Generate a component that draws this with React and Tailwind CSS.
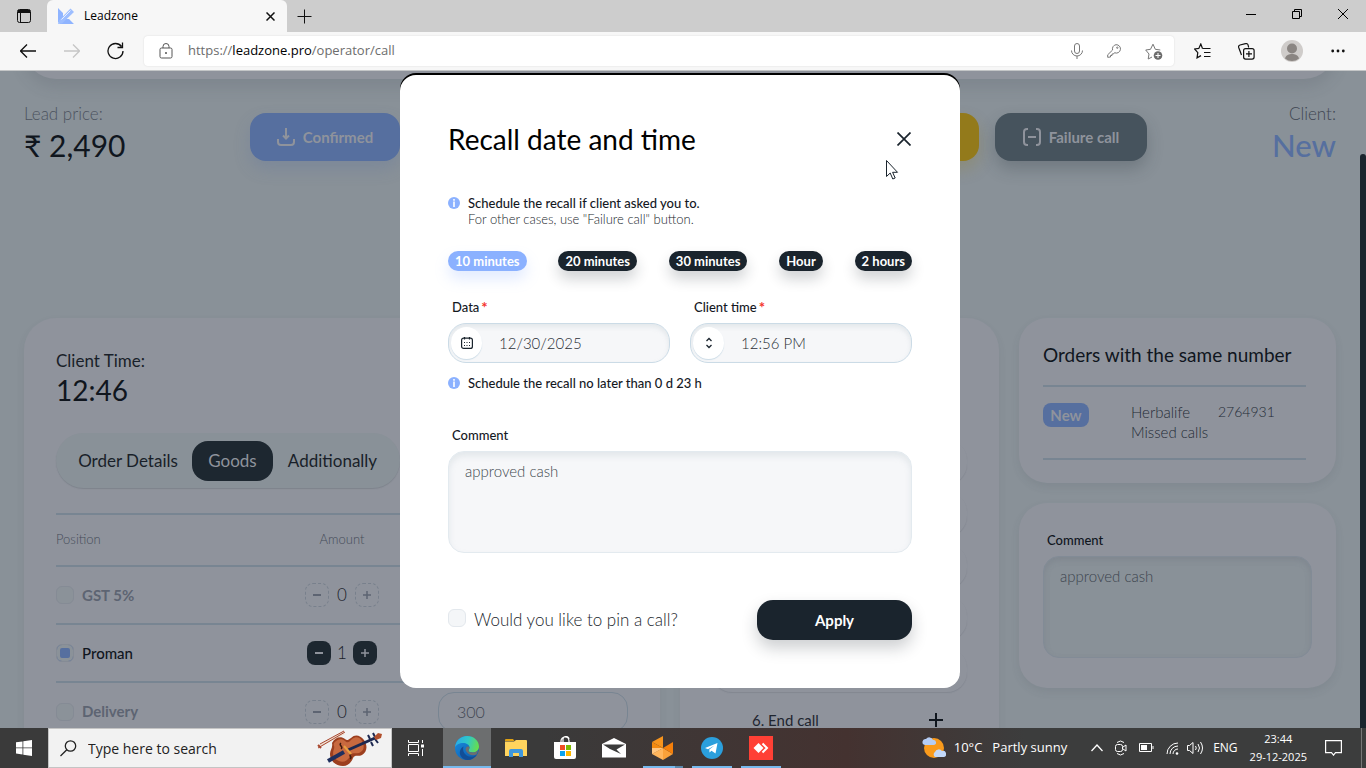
import { useState } from 'react'
import clsx from 'clsx'

const PRESETS = ['10 minutes', '20 minutes', '30 minutes', 'Hour', '2 hours']

const GOODS = [
  { name: 'GST 5%', amount: 0, active: false },
  { name: 'Proman', amount: 1, active: true },
  { name: 'Delivery', amount: 0, active: false, price: '300' },
]

// ---------- browser chrome ----------

function TabStrip() {
  return (
    <div className="flex h-8 shrink-0 items-end bg-[#cdcdcd]">
      <button type="button" aria-label="Tab actions" className="flex h-8 w-[47px] items-center justify-center">
        <svg width="14" height="14" viewBox="0 0 14 14" fill="none" stroke="#111">
          <rect x="0.5" y="0.5" width="13" height="13" rx="2" />
          <path d="M1 1.5h12M1 2.5h12M1 3.5h12" />
          <path d="M3.5 4v9" />
        </svg>
      </button>
      <div className="flex h-8 w-60 items-center rounded-t-md bg-[#f7f7f7] pr-3 pl-[10px]">
        <svg width="18" height="18" viewBox="0 0 18 18">
          <path d="M1 1l5 5v4l-5 6zM2 17l5-5h5l5 5z" fill="#8fb4ff" />
          <path d="M2 13.500L13.500 1.500 17 5 5 16.500 1 17z" fill="#9dbeff" />
          <path d="M4.500 12.500L13.500 3.500" stroke="#e6eeff" />
        </svg>
        <span className="ml-[9px] flex-1 text-[12px] text-black">Leadzone</span>
        <button type="button" aria-label="Close tab">
          <svg width="9" height="9" viewBox="0 0 9 9" stroke="#111" strokeWidth="1.500">
            <path d="M0.500 0.500l8 8M8.500 0.500l-8 8" />
          </svg>
        </button>
      </div>
      <button type="button" aria-label="New tab" className="ml-[10px] flex h-8 items-center">
        <svg width="15" height="15" viewBox="0 0 15 15" stroke="#111">
          <path d="M7.500 0.500v14M0.500 7.500h14" />
        </svg>
      </button>
      <div className="ml-auto flex h-7 items-center self-start">
        <button type="button" aria-label="Minimize" className="flex w-[46px] justify-center">
          <svg width="10" height="10" stroke="#000"><path d="M0 5.500h10" /></svg>
        </button>
        <button type="button" aria-label="Restore" className="flex w-[46px] justify-center">
          <svg width="10" height="10" fill="none" stroke="#000">
            <path d="M0.500 2.500h7v7h-7zM2.500 2.500v-2h7v7h-2" />
          </svg>
        </button>
        <button type="button" aria-label="Close" className="flex w-[46px] justify-center">
          <svg width="10" height="10" stroke="#000"><path d="M0 0l10 10M10 0L0 10" /></svg>
        </button>
      </div>
    </div>
  )
}

function Toolbar() {
  return (
    <div className="flex h-[39px] shrink-0 items-center border-b border-[#c4c6c7] bg-[#f7f7f7]">
      <div className="flex w-36 items-center justify-between pr-5 pl-5">
        <button type="button" aria-label="Back">
          <svg width="16" height="14" viewBox="0 0 16 14" fill="none" stroke="#111" strokeWidth="1.300">
            <path d="M7 0.500L0.500 7 7 13.500M0.500 7H16" />
          </svg>
        </button>
        <button type="button" aria-label="Forward">
          <svg width="16" height="14" viewBox="0 0 16 14" fill="none" stroke="#c6c6c6" strokeWidth="1.300">
            <path d="M9 0.500L15.500 7 9 13.500M15.500 7H0" />
          </svg>
        </button>
        <button type="button" aria-label="Refresh">
          <svg width="17" height="18" viewBox="0 0 17 18" fill="none" stroke="#111" strokeWidth="1.300">
            <path d="M14.500 4.500A7.500 7.500 0 1 0 16 9M15.500 0.500v5h-5" />
          </svg>
        </button>
      </div>
      <div className="flex h-[30px] flex-1 items-center rounded bg-white pr-[11px] pl-[15px] shadow-[0_0_2px_rgba(0,0,0,0.12)]">
        <svg width="14" height="16" viewBox="0 0 14 16" fill="none" stroke="#555">
          <rect x="1" y="5" width="12" height="10" rx="1.500" />
          <path d="M4 5V3.500a3 3 0 0 1 6 0V5" />
          <circle cx="7" cy="10" r="0.600" fill="#555" />
        </svg>
        <span className="ml-[15px] flex-1 text-[13px] text-[#6d6d6d]">
          https://<span className="text-black">leadzone.pro</span>/operator/call
        </span>
        <div className="flex items-center gap-6">
          <svg width="12" height="16" viewBox="0 0 12 16" fill="none" stroke="#777">
            <rect x="3.500" y="0.500" width="5" height="10" rx="2.500" />
            <path d="M0.500 7.500a5.500 5.500 0 0 0 11 0M6 13v3" />
          </svg>
          <svg width="14" height="14" viewBox="0 0 14 14" fill="none" stroke="#777">
            <path d="M9 0.700a4.200 4.200 0 1 1-1.500 8L6.500 10H5v1.500H3.500V13L0.700 13.300V10.800L5.600 6A4.200 4.200 0 0 1 9 0.700z" />
            <circle cx="10.300" cy="3.700" r="0.700" />
          </svg>
          <svg width="18" height="17" viewBox="0 0 18 17" fill="none" stroke="#777">
            <path d="M7 14l-3.800 2 .8-5L0.700 7l4.800-.7L8 1.200l2.300 5.100 5 .7" />
            <circle cx="13" cy="12.500" r="4.300" fill="#6b6b6b" stroke="none" />
            <path d="M13 10v5M10.500 12.500h5" stroke="#fff" />
          </svg>
        </div>
      </div>
      <div className="flex items-center pr-[21px] pl-5">
        <svg width="17" height="16" viewBox="0 0 17 16" fill="none" stroke="#111" strokeWidth="1.200">
          <path d="M8.500 5.500L6.800 1 4.800 5.400.6 6l3.200 3.600-.8 5.200L7 12.600M8.500 5.500H16.500M10 9.500h6.500M10 13.500h6.500" />
        </svg>
        <svg className="ml-[27px]" width="17" height="17" viewBox="0 0 17 17" fill="none" stroke="#111" strokeWidth="1.200">
          <path d="M3.500 12L0.700 4.500A2 2 0 0 1 2 2L7.500 0.700a2 2 0 0 1 2.600 1.400l.6 2.400" />
          <rect x="5.600" y="5.600" width="10.500" height="10.500" rx="2" />
          <path d="M10.900 8v6M8 10.900h6" />
        </svg>
        <svg className="ml-[26px]" width="22" height="22" viewBox="0 0 22 22">
          <circle cx="11" cy="11" r="11" fill="#cfccca" />
          <circle cx="11" cy="8.500" r="5" fill="#8a8582" />
          <path d="M4 18.500c1-3.500 4-4.500 7-4.500s6 1 7 4.500a11 11 0 0 1-14 0z" fill="#8a8582" />
        </svg>
        <svg className="ml-[28px]" width="14" height="4" fill="#111">
          <circle cx="1.700" cy="2" r="1.400" />
          <circle cx="7" cy="2" r="1.400" />
          <circle cx="12.300" cy="2" r="1.400" />
        </svg>
      </div>
    </div>
  )
}

// ---------- page behind the dialog ----------

function SummaryRow() {
  return (
    <div className="mt-[25px] flex items-start">
      <div className="w-[226px]">
        <div className="text-[17px] leading-5 font-light text-[#4c535f]">Lead price:</div>
        <div className="text-[30px] leading-[42px] text-[#10161e]">₹ 2,490</div>
      </div>
      <div className="mt-[9px] flex flex-1 gap-4 text-[15px] font-bold text-[#8f939c]">
        <button type="button" className="flex h-12 w-[150px] items-center justify-center gap-2 rounded-2xl bg-[#566f9f] shadow-[0_8px_16px_rgba(86,111,159,0.25)]">
          <svg width="18" height="18" viewBox="0 0 18 18" fill="none" stroke="currentColor" strokeWidth="2">
            <path d="M9 0v10M6 7.500l3 3 3-3M1 11v3a3 3 0 0 0 3 3h10a3 3 0 0 0 3-3v-3" />
          </svg>
          Confirmed
        </button>
        <button type="button" aria-label="Recall" className="h-12 flex-1 rounded-2xl bg-[#937a1b] shadow-[0_8px_16px_rgba(147,122,27,0.25)]" />
        <button type="button" className="flex h-12 w-[152px] items-center justify-center gap-2 rounded-2xl bg-[#46535d] shadow-[0_8px_16px_rgba(40,50,60,0.25)]">
          <svg width="18" height="18" viewBox="0 0 18 18" fill="none" stroke="currentColor" strokeWidth="2">
            <path d="M5 1H4a3 3 0 0 0-3 3v10a3 3 0 0 0 3 3h1M13 1h1a3 3 0 0 1 3 3v10a3 3 0 0 1-3 3h-1M5 9h8" />
          </svg>
          Failure call
        </button>
      </div>
      <div className="w-[189px] text-right">
        <div className="text-[17px] leading-5 font-light text-[#3f4651]">Client:</div>
        <div className="text-[31px] leading-[42px] font-medium text-[#566f9f]">New</div>
      </div>
    </div>
  )
}

function Counter({ amount, active }) {
  const btn = clsx(
    'flex size-6 items-center justify-center rounded-lg',
    active ? 'bg-[#1d2730] text-[#8f939c]' : 'border border-dashed border-[#78808c] text-[#5d6472]',
  )
  return (
    <div className="flex items-center justify-center">
      <button type="button" aria-label="Less" className={btn}>
        <svg width="8" height="8" stroke="currentColor" strokeWidth="2"><path d="M0 4h8" /></svg>
      </button>
      <span className={clsx('text-center text-[17px] font-light text-[#1a212a]', active ? 'w-[22px]' : 'w-[26px]')}>{amount}</span>
      <button type="button" aria-label="More" className={btn}>
        <svg width="8" height="8" stroke="currentColor" strokeWidth="1.500"><path d="M0 4h8M4 0v8" /></svg>
      </button>
    </div>
  )
}

function GoodsCard() {
  return (
    <section className="w-[636px] shrink-0 rounded-t-[32px] bg-[#8f939c] px-8 pt-8 shadow-[0_4px_8px_rgba(60,70,80,0.08)]">
      <div className="text-[17px] leading-[22px] text-[#191f29]">Client Time:</div>
      <div className="text-[28px] leading-9 text-[#10161e]">12:46</div>
      <div className="mt-[25px] flex h-[55px] w-[344px] items-center rounded-[28px] bg-[#899198] px-2 text-[17px] text-[#191f29] shadow-[0_1px_1px_rgba(60,70,80,0.2)]">
        <button type="button" className="h-10 flex-1">Order Details</button>
        <button type="button" className="h-10 w-[81px] rounded-2xl bg-[#1d2730] text-[#8f939c]">Goods</button>
        <button type="button" className="h-10 w-[119px]">Additionally</button>
      </div>
      <table className="mt-[25px] w-full table-fixed border-t-2 border-[#788592]">
        <thead>
          <tr className="h-[52px] text-[13px] font-light text-[#454c59]">
            <th className="w-[238px] text-left font-light">Position</th>
            <th className="w-24 text-center font-light">Amount</th>
            <th />
          </tr>
        </thead>
        <tbody>
          {GOODS.map((g) => (
            <tr key={g.name} className="h-[58px] border-t-2 border-[#788592]">
              <td>
                <label className={clsx('flex items-center gap-2 text-[15px]', g.active ? 'font-medium text-[#10161e]' : 'font-bold text-[#5d6472]')}>
                  <input
                    type="checkbox"
                    defaultChecked={g.active}
                    className="size-[18px] appearance-none rounded-md border border-[#858b95] bg-[#8b9299] checked:bg-[#566f9f] checked:shadow-[inset_0_0_0_3px_#8b9299]"
                  />
                  {g.name}
                </label>
              </td>
              <td><Counter amount={g.amount} active={g.active} /></td>
              <td>
                {g.price && (
                  <input
                    aria-label="Price"
                    defaultValue={g.price}
                    className="ml-auto block h-10 w-[190px] rounded-2xl border border-[#788592] px-[18px] text-[16px] font-light text-[#3f4651]"
                  />
                )}
              </td>
            </tr>
          ))}
        </tbody>
      </table>
    </section>
  )
}

function StepsCard() {
  return (
    <section className="w-[319px] shrink-0 rounded-t-[32px] bg-[#8f939c] px-8 pt-[122px] shadow-[0_4px_8px_rgba(60,70,80,0.08)]">
      <div className="flex flex-col gap-2">
        {[1, 2, 3, 4, 5].map((n) => (
          <div key={n} className="h-11 rounded-[20px] shadow-[0_1px_1px_rgba(60,70,80,0.15)]" />
        ))}
        <button type="button" className="flex h-10 items-center justify-between rounded-t-[20px] pr-6 pl-10 text-[15px] text-[#1f2630]">
          6. End call
          <svg width="14" height="14" stroke="#10161e" strokeWidth="2"><path d="M7 0v14M0 7h14" /></svg>
        </button>
      </div>
    </section>
  )
}

function SideColumn() {
  return (
    <div className="flex flex-1 flex-col gap-5">
      <section className="rounded-[28px] bg-[#8f939c] pt-6 pr-[30px] pb-[23px] pl-6 shadow-[0_4px_8px_rgba(60,70,80,0.1)]">
        <h2 className="text-[19px] leading-[26px] text-[#10161e]">Orders with the same number</h2>
        <div className="mt-[17px] flex items-start border-y-2 border-[#788592] pt-4 pb-4 text-[15px] leading-5 font-light text-[#242b36]">
          <span className="flex h-6 w-[46px] items-center justify-center rounded-lg bg-[#566f9f] font-bold text-[#8f939c]">New</span>
          <div className="-mt-px ml-[42px] grid grid-cols-[87px_auto]">
            <span>Herbalife</span>
            <span className="text-[14px]">2764931</span>
            <span className="col-span-2">Missed calls</span>
          </div>
        </div>
      </section>
      <section className="rounded-[28px] bg-[#8f939c] px-6 pt-[29px] pb-[30px] shadow-[0_4px_8px_rgba(60,70,80,0.1)]">
        <label htmlFor="page-comment" className="ml-1 block text-[13px] leading-4 font-medium text-[#10161e]">Comment</label>
        <textarea
          id="page-comment"
          defaultValue="approved cash"
          className="mt-2 block h-[102px] w-full resize-none rounded-2xl border border-[#828b96] bg-[#899198] px-4 py-[9px] text-[15px] leading-5 font-light text-[#3c444e] shadow-[inset_0_3px_6px_rgba(90,95,110,0.2)]"
        />
      </section>
    </div>
  )
}

// ---------- recall dialog ----------

function InfoDot() {
  return (
    <svg className="mt-[2px] shrink-0" width="12" height="12" viewBox="0 0 12 12">
      <circle cx="6" cy="6" r="6" fill="#8bb1ff" />
      <path d="M6 4.500V10M6 2v1.700" stroke="#fff" strokeWidth="1.600" />
    </svg>
  )
}

function PickerField({ id, label, value, icon }) {
  return (
    <div>
      <label htmlFor={id} className="ml-1 flex text-[13px] leading-4 font-medium text-[#15191f]">
        {label}<span className="ml-[2px] text-[15px] leading-4 font-bold text-[#f4342c]">*</span>
      </label>
      <div className="mt-2 flex h-10 items-center rounded-[18px] border border-[#cbdbe6] bg-[#f6f7f9] pl-[2px] shadow-[inset_0_3px_5px_rgba(150,170,180,0.2)]">
        <button type="button" aria-label={'Pick ' + label} className="flex h-8 w-[31px] shrink-0 items-center justify-center rounded-2xl bg-white shadow-[0_1px_1px_#cbdbe6]">
          {icon}
        </button>
        <input id={id} defaultValue={value} className="w-full min-w-0 flex-1 pl-[17px] text-[15px] font-light text-[#2a2f35]" />
      </div>
    </div>
  )
}

function RecallDialog() {
  const [preset, setPreset] = useState(PRESETS[0])

  return (
    <div role="dialog" aria-label="Recall date and time" className="h-fit w-[560px] rounded-2xl bg-white p-12 shadow-[0_-2px_0_#000]">
      <div className="flex h-8 items-center justify-between">
        <h1 className="text-[28px] leading-8 text-black">Recall date and time</h1>
        <button type="button" aria-label="Close" className="pr-[1px]">
          <svg width="14" height="14" stroke="#1a242d" strokeWidth="1.700"><path d="M0.500 0.500l13 13M13.500 0.500l-13 13" /></svg>
        </button>
      </div>

      <div className="mt-10 flex gap-2 text-[13px] leading-4">
        <InfoDot />
        <p>
          <span className="block font-medium text-[#15191f]">Schedule the recall if client asked you to.</span>
          <span className="block font-light text-[#20252b]">For other cases, use "Failure call" button.</span>
        </p>
      </div>

      <div className="mt-6 flex justify-between">
        {PRESETS.map((p) => (
          <button
            key={p}
            type="button"
            onClick={() => setPreset(p)}
            className={clsx(
              'h-5 rounded-[10px] px-[7px] text-[13px] leading-5 font-bold text-white',
              p === preset
                ? 'bg-[#8bb1ff] shadow-[0_8px_14px_rgba(139,177,255,0.25)]'
                : 'bg-[#1a242d] shadow-[0_8px_14px_rgba(26,36,45,0.2)]',
            )}
          >
            {p}
          </button>
        ))}
      </div>

      <div className="mt-7 grid grid-cols-2 gap-5">
        <PickerField
          id="recall-date"
          label="Data"
          value="12/30/2025"
          icon={
            <svg width="12" height="12" viewBox="0 0 12 12" fill="none" stroke="#1a242d" strokeWidth="1.200">
              <rect x="0.600" y="1.200" width="10.800" height="10.200" rx="2" />
              <path d="M3.500 0v2.500M8.500 0v2.500" />
              <path d="M3 5.500h1M5.500 5.500h1M8 5.500h1M3 8.500h1M5.500 8.500h1M8 8.500h1" />
            </svg>
          }
        />
        <PickerField
          id="recall-time"
          label="Client time"
          value="12:56 PM"
          icon={
            <svg width="8" height="12" viewBox="0 0 8 12" fill="none" stroke="#1a242d" strokeWidth="1.300">
              <path d="M1.500 4L4 1.500 6.500 4M1.500 8L4 10.500 6.500 8" />
            </svg>
          }
        />
      </div>

      <div className="mt-3 flex gap-2 text-[13px] leading-4 font-medium text-[#15191f]">
        <InfoDot />
        Schedule the recall no later than 0 d 23 h
      </div>

      <label htmlFor="recall-comment" className="mt-9 ml-1 block text-[13px] leading-4 font-medium text-[#15191f]">Comment</label>
      <textarea
        id="recall-comment"
        defaultValue="approved cash"
        className="mt-2 block h-[102px] w-full resize-none rounded-2xl border border-[#e3eaef] bg-[#f6f7f9] px-4 py-[9px] text-[15px] leading-5 font-light text-[#40474e] shadow-[inset_0_4px_6px_rgba(150,170,180,0.2)]"
      />

      <div className="mt-[47px] flex h-10 items-center justify-between">
        <label className="flex items-center gap-2 text-[17px] leading-5 font-light text-[#20252b]">
          <input type="checkbox" className="-mt-1 size-[18px] appearance-none rounded-md border border-[#e3e8ed] bg-[#f4f6f8] checked:bg-[#8bb1ff]" />
          Would you like to pin a call?
        </label>
        <button type="button" className="h-10 w-[155px] rounded-2xl bg-[#1a242d] text-[15px] font-bold text-white shadow-[0_8px_16px_rgba(26,36,45,0.22)]">
          Apply
        </button>
      </div>
    </div>
  )
}

// ---------- taskbar ----------

function Violin() {
  return (
    <svg width="66" height="37" viewBox="0 0 66 37" fill="none">
      <path d="M2 16L27 3" stroke="#efe2d5" strokeWidth="3" />
      <path d="M1 18L28 2M3 14L27 1" stroke="#a8462e" strokeWidth="1" />
      <path d="M1 15l3 3" stroke="#a8462e" strokeWidth="2" />
      <path d="M15 13c3-6 9-7 13-4 2 2 3 1 6-1 4-4 9-3 13 2 4 6 3 12-2 15-4 2-7-1-9 3-1 3-4 8-10 8-7 0-13-5-13-12 0-4 3-6 2-11z" fill="#9c3f1f" />
      <path d="M17 13c3-4 8-5 11-2 3 3 5 0 7-2 4-3 8-2 10 2 3 5 2 10-3 12-4 1-7-1-9 3-2 5-7 7-11 5-6-2-7-7-5-12 1-3-1-4 0-6z" fill="#c8693f" />
      <path d="M24 13c-3 2 3 4 0 6M34 24c-3 2 2 3-1 5" stroke="#3c1a10" strokeWidth="1.500" />
      <path d="M11 31L27 22" stroke="#1f2f5e" strokeWidth="4" />
      <path d="M31 20L58 8" stroke="#1c2850" strokeWidth="3" />
      <path d="M27 16l7 8" stroke="#e9a040" strokeWidth="2" />
      <path d="M51 5l2 4M56 3l2 4M54 12l2 4M58 9l3 4" stroke="#1c2850" strokeWidth="2" />
      <path d="M57 7l4-4 4 1-1 4-5 2z" fill="#b14f2c" />
    </svg>
  )
}

function EdgeLogo() {
  return (
    <svg width="24" height="24" viewBox="0 0 24 24">
      <defs>
        <linearGradient id="edge-top" x1="0" y1="0.300" x2="1" y2="0.500">
          <stop offset="0" stopColor="#2aa9e8" />
          <stop offset="0.500" stopColor="#2fc8c9" />
          <stop offset="1" stopColor="#68de4a" />
        </linearGradient>
        <linearGradient id="edge-low" x1="0" y1="0" x2="0.800" y2="1">
          <stop offset="0" stopColor="#1a8fe0" />
          <stop offset="1" stopColor="#0c5cb0" />
        </linearGradient>
      </defs>
      <circle cx="12" cy="12" r="12" fill="url(#edge-low)" />
      <path d="M0 11.500C.5 5 5.500 0 12 0c7 0 12 5 12 10.500 0 3.500-2.500 6-6 6-3 0-4.500-1-4.500-2 0-.8 1-1.200 1-3C14.500 8.500 11 7 8.500 7 4 7 1 9 0 11.500z" fill="url(#edge-top)" />
      <path d="M8.500 10.500C7 15 10 20.500 16 20.800c2.500 0 4.500-.8 6-2.300-2 3.500-5.500 5.500-9.500 5.500C7 23.500 4 19 5 15c.6-2.300 2-3.800 3.500-4.500z" fill="#124e97" />
      <path d="M14.500 11c0 2-1 2.700-1 3.500 0 1 1.500 2 4.500 2 2 0 4-.8 5.200-2.400-.4 1.900-1 3.300-1.700 4.300-3 1.600-8.500.8-10.500-3.400-1-2.500.5-5.500 3.500-4z" fill="#6c6e6f" />
    </svg>
  )
}

function Taskbar() {
  return (
    <footer className="flex h-10 shrink-0 items-stretch bg-linear-to-r from-[#3a3a3a] from-40% via-[#443230] via-62% to-[#3c3d3d] to-75% text-white">
      <button type="button" aria-label="Start" className="flex w-12 items-center justify-center">
        <svg width="16" height="16" fill="#fff">
          <path d="M0 2.300L6.500 1.400V7.500H0zM7.300 1.300L16 0v7.500H7.300zM0 8.300h6.500v6.200L0 13.600zM7.300 8.300H16V16l-8.700-1.300z" />
        </svg>
      </button>
      <div className="flex w-[344px] items-center border border-[#c4c4c4] bg-[#f2f2f2] pr-2 pl-[11px]">
        <svg width="17" height="17" viewBox="0 0 17 17" fill="none" stroke="#222" strokeWidth="1.300">
          <circle cx="10.500" cy="6" r="5.200" />
          <path d="M6.800 9.800L0.500 16" />
        </svg>
        <input aria-label="Search" placeholder="Type here to search" className="ml-[11px] min-w-0 flex-1 text-[14px] placeholder:text-[#222]" />
        <Violin />
      </div>
      <button type="button" aria-label="Task view" className="flex w-[51px] items-center justify-center pr-1">
        <svg width="18" height="16" fill="none" stroke="#fff">
          <path d="M1.500 0v2.500h10V0M1.500 16v-2.500h10V16M1.500 4.500h10v7h-10zM15.500 0v3M15.500 9v7" />
          <path d="M14 6h3" strokeWidth="3" />
        </svg>
      </button>
      <div className="flex items-stretch gap-px">
        <button type="button" aria-label="Edge" className="flex w-12 items-center justify-center border-b-2 border-[#76b9ed] bg-[#6c6e6f] pt-[2px]"><EdgeLogo /></button>
        <button type="button" aria-label="Files" className="flex w-12 items-center justify-center">
          <svg width="22" height="18">
            <path d="M0 1a1 1 0 0 1 1-1h7l1.500 2H0z" fill="#e0a112" />
            <path d="M0 2.500h9L11 1h10a1 1 0 0 1 1 1v15H0z" fill="#ffd45e" />
            <path d="M4 18v-6a2 2 0 0 1 2-2h10a2 2 0 0 1 2 2v6h-4v-4H8v4z" fill="#3f97dd" />
          </svg>
        </button>
        <button type="button" aria-label="Store" className="flex w-12 items-center justify-center">
          <svg width="24" height="24" fill="none">
            <path d="M8 6V5a4 4 0 0 1 8 0v1M10 6V4a3 3 0 0 1 6-1" stroke="#fff" strokeWidth="1.200" />
            <path d="M1 6h22v15a2 2 0 0 1-2 2H3a2 2 0 0 1-2-2z" fill="#fff" />
            <path d="M7 9h5v5H7z" fill="#f04e23" />
            <path d="M13 9h5v5h-5z" fill="#7db900" />
            <path d="M7 15h5v5H7z" fill="#0aa2ee" />
            <path d="M13 15h5v5h-5z" fill="#fdb800" />
          </svg>
        </button>
        <button type="button" aria-label="Mail" className="flex w-12 items-center justify-center">
          <svg width="24" height="20">
            <path d="M0 6L12 0l12 6v13.500H0z" fill="#fff" />
            <path d="M1 6.500h22L14.500 11.500 19 16 8 11z" fill="#3b3b3b" />
          </svg>
        </button>
        <button type="button" aria-label="Call app" className="mx-1 flex w-10 flex-col items-center justify-between pt-2">
          <svg width="22" height="24">
            <path d="M11 0v12L0 6z" fill="#f7941d" />
            <path d="M0 6l11 6-11 6z" fill="#f48a10" />
            <path d="M0 18l11-6v12z" fill="#ffb55c" />
            <path d="M0 18V12l11 0z" fill="#ffc681" />
            <path d="M11 12v12l10-6z" fill="#f9a13a" />
            <path d="M11 12L21 6v12z" fill="#f57f0a" />
          </svg>
          <span className="flex h-[2px] w-full bg-[#76b9ed]">
            <span className="ml-auto w-2 bg-[#5b88ab]" />
          </span>
        </button>
        <button type="button" aria-label="Telegram" className="mx-1 flex w-10 items-center justify-center border-b-2 border-[#76b9ed] pt-[2px]">
          <svg width="22" height="22">
            <circle cx="11" cy="11" r="11" fill="#2b9fdc" />
            <path d="M4 11l12.500-5L14.500 16.500 10.500 13.700 8.500 15.500 8.300 12.500 13.500 8.500 7 12.200z" fill="#fff" />
          </svg>
        </button>
        <button type="button" aria-label="Remote desk" className="mx-1 flex w-10 items-center justify-center border-b-2 border-[#76b9ed] pt-[2px]">
          <svg width="24" height="24">
            <path d="M0 0h24v24H0z" fill="#ff4035" />
            <path d="M9.500 7l5 5-5 5-5-5z" fill="#fff" />
            <path d="M13.500 7.500l4.500 4.500-4.500 4.500" fill="none" stroke="#fff" strokeWidth="2" />
          </svg>
        </button>
      </div>

      <div className="ml-auto flex items-center">
        <svg width="24" height="24">
          <circle cx="12" cy="12" r="10" fill="#f99a1c" />
          <path d="M3 9a3 3 0 0 1 1-6 4 4 0 0 1 7 1 2.500 2.500 0 0 1 1 5z" fill="#b5cdf5" />
          <path d="M13 21a3 3 0 0 1 0-5 4 4 0 0 1 7-1 3 3 0 0 1 2 6z" fill="#c3d8fa" />
        </svg>
        <span className="ml-2 text-[13px]">10°C</span>
        <span className="ml-[10px] text-[13px]">Partly sunny</span>
        <svg className="ml-6" width="12" height="8" fill="none" stroke="#fff" strokeWidth="1.300"><path d="M0.500 7L6 1l5.500 6" /></svg>
        <svg className="ml-3" width="12" height="16" fill="none" stroke="#fff">
          <path d="M2 2.500Q5.500-0.500 9 2.500M2 13.500q3.500 3 7 0" />
          <rect x="0.500" y="4.500" width="7" height="7" rx="2" />
          <path d="M8 7l3-2v6L8 9" />
        </svg>
        <svg className="ml-3" width="15" height="10" fill="none" stroke="#fff">
          <path d="M0.500 0.500h12v8h-12zM14 3v3" />
          <path d="M2 2h6v5H2z" fill="#fff" stroke="none" />
        </svg>
        <svg className="ml-3" width="13" height="13" fill="none" stroke="#fff">
          <path d="M1 12A11 11 0 0 1 12 1M4 12a8 8 0 0 1 8-8M7 12a5 5 0 0 1 5-5" />
          <circle cx="11" cy="11.500" r="1.300" fill="#fff" stroke="none" />
        </svg>
        <svg className="ml-2" width="17" height="14" fill="none" stroke="#fff">
          <path d="M0.500 4.500h2L6 1.500v11L2.500 9.500h-2zM8.500 5q1.500 2 0 4M11 3q3 4 0 8M13.500 1q4 6 0 12" />
        </svg>
        <span className="ml-[9px] text-[12px]">ENG</span>
        <time className="ml-3 text-center text-[11px] leading-[18px]">
          23:44<br />29-12-2025
        </time>
        <svg className="ml-[18px]" width="17" height="16" fill="none" stroke="#fff" strokeWidth="1.200">
          <path d="M0.600 0.600h15.800v12H10.500l-2 2.500-2-2.500H0.600z" />
        </svg>
        <div className="mr-1 ml-[19px] h-full w-px bg-[#777]" />
      </div>
    </footer>
  )
}

export default function App() {
  return (
    <div className="flex h-screen flex-col overflow-hidden font-['Open_Sans',sans-serif]">
      <TabStrip />
      <Toolbar />
      <div className="relative flex min-h-0 flex-1 overflow-hidden bg-[#899198] font-['Lato','Noto_Sans',sans-serif]">
        <main className="flex min-w-0 flex-1 flex-col px-6">
          <div className="-mt-14 h-16 shrink-0 rounded-[32px] bg-[#8f939c] shadow-[0_8px_16px_rgba(60,70,80,0.15)]" />
          <SummaryRow />
          <div className="mt-[152px] flex items-start gap-5">
            <GoodsCard />
            <StepsCard />
            <SideColumn />
          </div>
        </main>
        <div className="mt-[83px] w-[6px] shrink-0 rounded-t bg-[#1a242d]" />
        <div className="absolute inset-y-0 right-[6px] left-0 flex justify-center pt-1">
          <RecallDialog />
        </div>
        {/* mouse pointer */}
        <svg className="absolute top-[89px] left-[886px]" width="13" height="20" fill="#fff" stroke="#1a242d">
          <path d="M0.500 0.500v16l3.700-3.500 2.600 6 2.400-1-2.600-5.700H11.500z" />
        </svg>
      </div>
      <Taskbar />
    </div>
  )
}
